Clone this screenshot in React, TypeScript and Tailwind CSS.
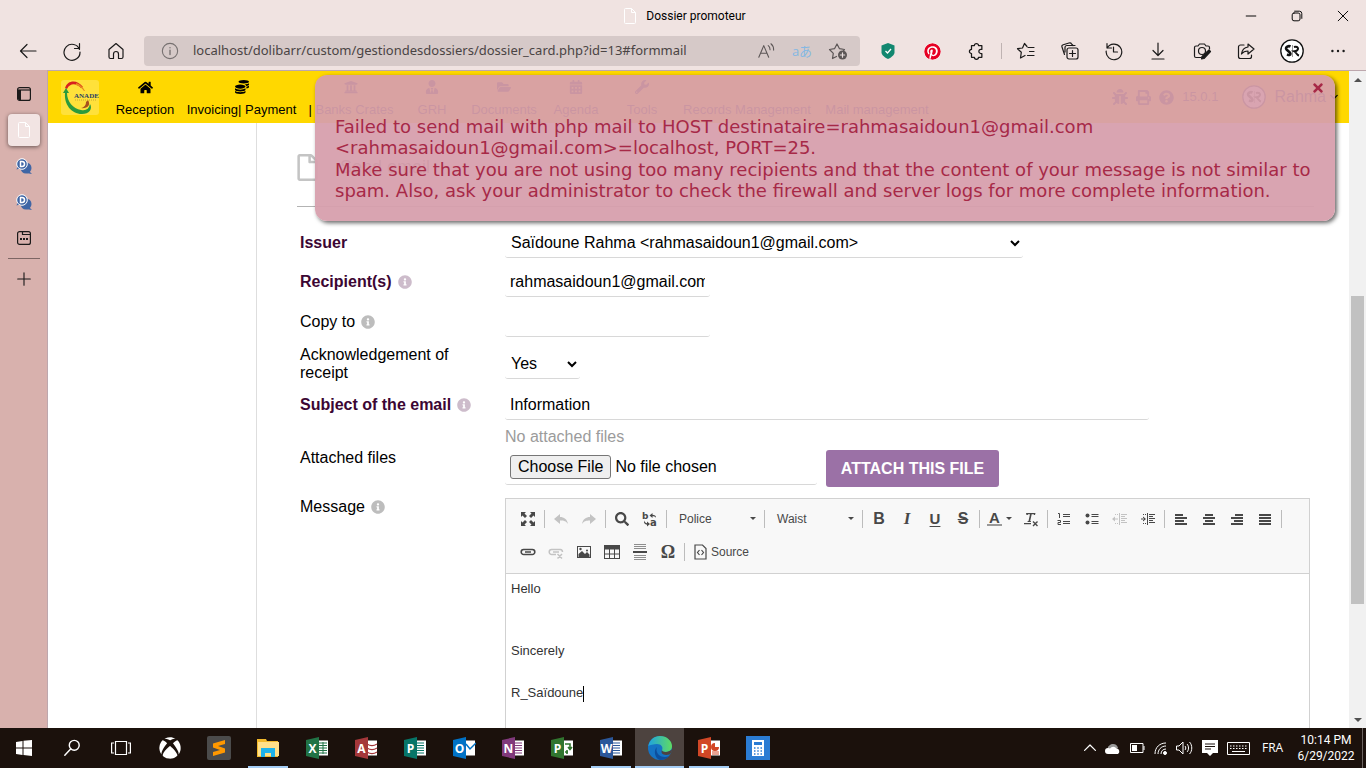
import React from 'react';
import {
  FaHome,
  FaCoins,
  FaUniversity,
  FaUserTie,
  FaFolderOpen,
  FaCalendarAlt,
  FaWrench,
  FaBug,
  FaPrint,
  FaQuestionCircle,
  FaInfoCircle,
  FaPinterest,
  FaXbox,
  FaTimes,
  FaRegFile,
  FaSearch,
} from 'react-icons/fa';

interface SvgProps {
  size?: number;
  className?: string;
  stroke?: number;
  children: React.ReactNode;
}

// Thin line icon on a 20x20 grid, used by the browser chrome
const Line: React.FC<SvgProps> = ({ size = 20, className, stroke = 1.2, children }) => (
  <svg
    width={size}
    height={size}
    viewBox="0 0 20 20"
    fill="none"
    stroke="currentColor"
    strokeWidth={stroke}
    strokeLinecap="round"
    strokeLinejoin="round"
    className={className}
    aria-hidden="true"
  >
    {children}
  </svg>
);

// Solid icon on a 16x16 grid, used by the editor toolbar
const Glyph: React.FC<{ children: React.ReactNode }> = ({ children }) => (
  <svg width="16" height="16" viewBox="0 0 16 16" fill="currentColor" aria-hidden="true">
    {children}
  </svg>
);

const PageIcon = ({ className }: { className?: string }) => (
  <svg width="12" height="16" viewBox="0 0 12 16" fill="none" stroke="currentColor" className={className} aria-hidden="true">
    <path d="M1.5.5h6l4 4v10a1 1 0 0 1-1 1h-9a1 1 0 0 1-1-1v-13a1 1 0 0 1 1-1zM7.5.5v4h4" />
  </svg>
);

const SrAvatar = ({ size }: { size: number }) => (
  <svg width={size} height={size} viewBox="0 0 24 24" aria-hidden="true">
    <circle cx="12" cy="12" r="11.2" fill="#fff" stroke="#111" strokeWidth="1.3" />
    <path d="M10.500 7.500C8.500 6.500 5.500 8 6.200 10c.8 2 4.300 2.500 4.300 4.800 0 1.500-1.500 1.500-3.500.5" fill="none" stroke="#111" strokeWidth="2.600" />
    <path d="M12.500 6v12" stroke="#999" strokeWidth="1" />
    <path d="M14 8c5-1.500 5.500 3.800.5 4.300 1.500.7 2 3.700 4.500 4.200" fill="none" stroke="#111" strokeWidth="2" />
  </svg>
);

const ChromeButton: React.FC<{ label: string; className?: string; children: React.ReactNode }> = ({
  label,
  className = 'w-11',
  children,
}) => (
  <button aria-label={label} className={`${className} h-full flex items-center justify-center shrink-0`}>
    {children}
  </button>
);

const TitleBar = () => (
  <div className="grid grid-cols-[1fr_auto_1fr] h-8 items-center">
    <span />
    <div className="flex items-center gap-2.5 pl-1 text-[12px] font-[Roboto,sans-serif]">
      <PageIcon className="text-white" />
      <span>Dossier promoteur</span>
    </div>
    <div className="flex justify-end h-full">
      <ChromeButton label="Minimize" className="w-[46px]">
        <Line size={12} stroke={1.6}><path d="M2 10h16" /></Line>
      </ChromeButton>
      <ChromeButton label="Restore" className="w-[46px]">
        <Line size={12} stroke={1.6}>
          <rect x="2" y="5" width="13" height="13" rx="3" />
          <path d="M6 2h8a4 4 0 0 1 4 4v8" />
        </Line>
      </ChromeButton>
      <ChromeButton label="Close" className="w-[46px]">
        <Line size={12} stroke={1.6}><path d="M2 2l16 16M18 2L2 18" /></Line>
      </ChromeButton>
    </div>
  </div>
);

const AddressBar = () => (
  <div className="flex flex-1 items-center h-[30px] mx-1.5 rounded bg-[#d6c9c8] min-w-0">
    <Line size={18} className="ml-[17px] text-[#767070]">
      <circle cx="10" cy="10" r="8.500" />
      <path d="M10 9v5M10 6.200v.3" strokeWidth="1.500" />
    </Line>
    <input
      aria-label="Address"
      readOnly
      value="localhost/dolibarr/custom/gestiondesdossiers/dossier_card.php?id=13#formmail"
      className="flex-1 min-w-0 ml-3.5 bg-transparent text-[13px] text-[#4a4444] outline-none font-['Noto_Sans',sans-serif]"
    />
    <button aria-label="Read aloud" className="w-9 flex justify-center text-[#5c5656]">
      <Line size={18}>
        <path d="M2 17L7.500 4 13 17M4 12.500h7M12.500 4c1.500 1 2 2.500 2 4.500M15.500 2c2 1.500 3 4 3 7" />
      </Line>
    </button>
    <button aria-label="Translate" className="w-9 text-[13px] leading-4 text-[#84b8e3] font-['Open_Sans','Noto_Sans_CJK_JP',sans-serif]">
      aあ
    </button>
    <button aria-label="Add to favorites" className="w-9 mr-1 flex justify-center text-[#5c5656]">
      <Line size={20}>
        <path d="M8.500 15.500L4.500 17.500l.8-5.200L1.500 8.500l5-.8L9 3l2.500 4.700 5 .8-1 1.200" />
        <circle cx="14.500" cy="14" r="4.500" fill="currentColor" stroke="none" />
        <path d="M14.500 11.800v4.400M12.300 14h4.400" stroke="#e8dddc" />
      </Line>
    </button>
  </div>
);

const BrowserToolbar = () => (
  <div className="flex items-center h-[38px] pl-1.5 pr-1.5 text-[#1b1a1a]">
    <ChromeButton label="Back"><Line><path d="M18 10H2.500M9 3.500L2.500 10 9 16.500" /></Line></ChromeButton>
    <ChromeButton label="Refresh">
      <Line><path d="M17.500 8.500A8 8 0 1 0 18 11M17.500 2.500v5h-5" /></Line>
    </ChromeButton>
    <ChromeButton label="Home">
      <Line><path d="M3 8.500L10 2.500l7 6V16a1.500 1.500 0 0 1-1.500 1.500h-3v-4.500a2.500 2.500 0 0 0-5 0v4.500h-3A1.500 1.500 0 0 1 3 16z" /></Line>
    </ChromeButton>
    <AddressBar />
    <ChromeButton label="Protection">
      <svg width="14" height="16" viewBox="0 0 14 16" aria-hidden="true">
        <path d="M7 0l6.500 2.500v7C13.500 12 9.500 15 7 16 4.500 15 .5 12 .5 9.500v-7z" fill="#12876f" />
        <path d="M4.500 8l2 2 3.500-4" fill="none" stroke="#fff" strokeWidth="1.300" />
      </svg>
    </ChromeButton>
    <ChromeButton label="Pinterest"><FaPinterest size={17} className="text-[#e60023] bg-white rounded-full" /></ChromeButton>
    <ChromeButton label="Extensions">
      <Line size={18} stroke={1.4}>
        <path d="M5 4h3.200a2.300 2.300 0 1 1 4.600 0H16.500v4.200h-1a2.300 2.300 0 1 0 0 4.600h1V17h-3.700a2.300 2.300 0 0 1-4.600 0H5v-4.200a2.300 2.300 0 1 1 0-4.600z" />
      </Line>
    </ChromeButton>
    <div className="w-1.5 flex justify-center"><span className="w-px h-4 bg-[#bfb3b2]" /></div>
    <ChromeButton label="Favorites">
      <Line>
        <path d="M12 6.500h6M13.500 10.500h4.500M11.500 14.500H18M11 5.500L8.500 2.500l-2 4.500-5 .7 3.800 3.600L4.500 17l4.500-2.500" />
      </Line>
    </ChromeButton>
    <ChromeButton label="Collections">
      <Line>
        <rect x="7" y="7" width="11" height="11" rx="2" />
        <path d="M12.500 9.500v6M9.500 12.500h6M4.500 13.500L2 6c-.3-1 .2-2 1.200-2.300L9 2c1-.3 2-.1 2.500.8L13 4.500M5 11V6.500A2 2 0 0 1 7 4.500h8" />
      </Line>
    </ChromeButton>
    <ChromeButton label="History">
      <Line><path d="M3 2.500v4.500h4.500M3.200 7A7.800 7.800 0 1 1 2.200 10M9.500 6v5h4" /></Line>
    </ChromeButton>
    <ChromeButton label="Downloads"><Line><path d="M10 2v12M5 9.500l5 5 5-5M4 18h12" /></Line></ChromeButton>
    <ChromeButton label="Screenshot">
      <Line>
        <path d="M9 16.500H4A1.500 1.500 0 0 1 2.500 15V6.500A1.500 1.500 0 0 1 4 5h2l1.500-2h5L14 5h2a1.500 1.500 0 0 1 1.500 1.500V8" />
        <circle cx="10" cy="10" r="3.500" />
        <path d="M17 9l1.500 1.500-6.500 7-2.500.5.500-2.500z" fill="currentColor" />
      </Line>
    </ChromeButton>
    <ChromeButton label="Share">
      <Line>
        <path d="M8 4H4.500A2 2 0 0 0 2.500 6v9.500a2 2 0 0 0 2 2h9a2 2 0 0 0 2-2V14M12 3l6 5-6 5v-3c-3 0-5 1-6.500 3C6 9 8.500 6.500 12 6z" />
      </Line>
    </ChromeButton>
    <ChromeButton label="Profile" className="w-12"><SrAvatar size={24} /></ChromeButton>
    <ChromeButton label="Settings">
      <Line size={16}>
        <g fill="currentColor" stroke="none">
          <circle cx="3" cy="10" r="1.500" /><circle cx="10" cy="10" r="1.500" /><circle cx="17" cy="10" r="1.500" />
        </g>
      </Line>
    </ChromeButton>
  </div>
);

const DolibarrIcon = () => (
  <svg width="18" height="17" viewBox="0 0 18 17" aria-hidden="true">
    <circle cx="11" cy="10" r="5.500" fill="#3f66a5" />
    <path d="M13 12l4 4-6-1z" fill="#3f66a5" />
    <path d="M3 8l-1.500 3.500L6 10z" fill="#3f66a5" />
    <circle cx="7" cy="6" r="5.300" fill="#3f66a5" stroke="#fff" />
    <path d="M5.500 3.500v5H7a2.500 2.500 0 0 0 0-5z" fill="none" stroke="#fff" strokeWidth="1.500" />
  </svg>
);

const VerticalTabs = () => (
  <div className="w-12 shrink-0 bg-[#d8b1ad] border-r border-[#bda7ad] flex flex-col items-center pt-1.5 text-[#1b1a1a]">
    <button aria-label="Toggle tabs" className="h-9 flex items-center">
      <svg width="14" height="14" viewBox="0 0 14 14" fill="none" stroke="currentColor" strokeWidth="1.200" aria-hidden="true">
        <rect x=".6" y=".6" width="12.800" height="12.800" rx="2" />
        <path d="M1 3h12.500" />
        <path d="M1 3h3v10H2l-1-1z" fill="currentColor" stroke="none" />
      </svg>
    </button>
    <div className="h-9 flex items-center">
      <button aria-label="Dossier promoteur" className="w-8 h-8 rounded bg-[#f2e4e3] shadow-[0_1px_4px_#00000088] flex items-center justify-center">
        <PageIcon className="text-white" />
      </button>
    </div>
    <button aria-label="Dolibarr" className="h-9 flex items-center"><DolibarrIcon /></button>
    <button aria-label="Dolibarr" className="h-9 flex items-center"><DolibarrIcon /></button>
    <button aria-label="Tab" className="h-9 flex items-center">
      <svg width="14" height="14" viewBox="0 0 14 14" fill="none" stroke="currentColor" strokeWidth="1.200" aria-hidden="true">
        <rect x=".6" y=".6" width="12.800" height="12.800" rx="2" />
        <path d="M5.500 1v2.500h8" />
        <path d="M3 8h2M6 8h2M9 8h2" strokeWidth="2" />
      </svg>
    </button>
    <span className="mt-0.5 w-8 h-px bg-[#7d6664]" />
    <button aria-label="New tab" className="h-10 flex items-center">
      <Line size={14} stroke={1.6}><path d="M10 1v18M1 10h18" /></Line>
    </button>
  </div>
);

const AnadeLogo = () => (
  <svg width="38" height="35" viewBox="0 0 38 35" aria-hidden="true">
    <rect width="38" height="35" rx="3" fill="#ffe13a" />
    <path d="M4 8C7-1 17 0 22 7l-2 1C15 3 9 3 6 9z" fill="#d8201f" />
    <path d="M15 3c4 1 7 4 9 8l-1 0c-2-3-5-5-8-6z" fill="#e88b1e" />
    <path d="M2 13l3-5 3 5-2 0c0 8 6 16 14 17 5 1 8-1 9-6 3 5-1 10-8 10C10 34 3 24 4 13z" fill="#2c9a3d" />
    <path d="M27 20c3 5 0 9-8 8 3 0 6-2 6-6z" fill="#a8511e" />
    <text x="13" y="18" fontSize="7" fontWeight="bold" fontFamily="Liberation Serif, serif" fill="#2b3f63">ANADE</text>
    <path d="M14 20h22" stroke="#c9a832" strokeDasharray="1 1" />
  </svg>
);

interface NavItem {
  label: string;
  width: string;
  icon?: React.ReactNode;
}

const navItems: NavItem[] = [
  { label: 'Reception', width: 'w-[72px]', icon: <FaHome size={15} /> },
  { label: 'Invoicing| Payment', width: 'w-[121px]', icon: <FaCoins size={14} /> },
  { label: '| Banks Crates', width: 'w-[98px]', icon: <FaUniversity size={14} /> },
  { label: 'GRH', width: 'w-[64px]', icon: <FaUserTie size={14} /> },
  { label: 'Documents', width: 'w-[80px]', icon: <FaFolderOpen size={14} /> },
  { label: 'Agenda', width: 'w-[64px]', icon: <FaCalendarAlt size={14} /> },
  { label: 'Tools', width: 'w-[68px]', icon: <FaWrench size={14} /> },
  { label: 'Records Management', width: 'w-[142px]' },
  { label: 'Mail management', width: 'w-[118px]' },
];

const TopMenu = () => (
  <nav className="flex h-[52px] shrink-0 bg-[#ffd800] text-black">
    <a href="#home" aria-label="Anade" className="w-[61px] pl-[13px] flex items-center shrink-0"><AnadeLogo /></a>
    {navItems.map((item) => (
      <a key={item.label} href="#menu" className={`${item.width} shrink-0 flex flex-col items-center pt-[9px] text-[13px] leading-[18px] whitespace-nowrap`}>
        <span className="h-[21px]">{item.icon}</span>
        {item.label}
      </a>
    ))}
    <div className="ml-auto flex items-center pr-[11px] text-[13px]">
      <FaBug size={16} className="mr-2" />
      <FaPrint size={15} className="mr-2" />
      <FaQuestionCircle size={15} className="mr-2" />
      <span className="mr-6">15.0.1</span>
      <SrAvatar size={24} />
      <span className="ml-2 mr-1 text-[16px]">Rahma</span>
      <Line size={8} stroke={3}><path d="M2 6l8 8 8-8" /></Line>
    </div>
  </nav>
);

const ErrorNotice = () => (
  <div
    role="alert"
    className="absolute left-[267px] right-3.5 top-1 rounded-xl bg-[#d79eac]/94 shadow-[2px_2px_4px_#00000099] px-5 pt-[41px] pb-5 flex flex-col gap-px text-[18px] leading-[21px] text-[#a72947] font-[Verdana,'DejaVu_Sans',sans-serif]"
  >
    <button aria-label="Close message" className="absolute top-1.5 right-2.5">
      <FaTimes size={14} />
    </button>
    <p>
      Failed to send mail with php mail to HOST destinataire=rahmasaidoun1@gmail.com
      <br />
      &lt;rahmasaidoun1@gmail.com&gt;=localhost, PORT=25.
    </p>
    <p>
      Make sure that you are not using too many recipients and that the content of your message is not similar to spam. Also,
      ask your administrator to check the firewall and server logs for more complete information.
    </p>
  </div>
);

interface RowProps {
  label: string;
  htmlFor: string;
  bold?: boolean;
  info?: boolean;
  className?: string;
  children: React.ReactNode;
}

const Row: React.FC<RowProps> = ({ label, htmlFor, bold, info, className = 'h-10 items-center', children }) => (
  <div className={`grid grid-cols-[205px_1fr] ${className}`}>
    <label htmlFor={htmlFor} className={`flex items-center gap-1.5 ${bold ? 'font-bold text-[#3c0633]' : 'pr-10'}`}>
      {label}
      {info && <FaInfoCircle size={14} className={bold ? 'text-[#cdbccb]' : 'text-[#bdbdbd]'} />}
    </label>
    {children}
  </div>
);

const fieldClass = 'h-[30px] rounded-[3px] border-b border-[#d8d8d8] bg-white outline-none';

const Tool: React.FC<{ label: string; off?: boolean; children: React.ReactNode }> = ({ label, off, children }) => (
  <button type="button" aria-label={label} disabled={off} className={`w-7 h-7 flex items-center justify-center ${off ? 'text-[#c3c3c3]' : 'text-[#484848]'}`}>
    {children}
  </button>
);

const Sep = () => (
  <span className="w-[5px] flex justify-center"><span className="w-px h-[18px] bg-[#bcbcbc]" /></span>
);

const Arrow = () => (
  <svg width="6" height="3" viewBox="0 0 6 3" aria-hidden="true"><path d="M0 0h6L3 3z" fill="#484848" /></svg>
);

const Combo = ({ label }: { label: string }) => (
  <button type="button" className="w-[93px] h-7 pl-2.5 pr-1.5 flex items-center justify-between">
    {label}
    <Arrow />
  </button>
);

const Editor = () => (
  <div className="border border-[#d1d1d1] grow flex flex-col min-h-[240px]">
    <div className="bg-[#f8f8f8] border-b border-[#d1d1d1] pl-2 pt-[3px] pb-[5px] text-[12px] text-[#484848]">
      <div className="flex items-center h-[33px]">
        <Tool label="Maximize">
          <Glyph>
            <path d="M1 1h5L4.500 2.500 7 5 5 7 2.500 4.500 1 6zM15 1v5l-1.500-1.500L11 7 9 5l2.500-2.500L10 1zM1 15v-5l1.500 1.500L5 9l2 2-2.500 2.500L6 15zM15 15h-5l1.500-1.500L9 11l2-2 2.500 2.500L15 10z" />
          </Glyph>
        </Tool>
        <Sep />
        <Tool label="Undo" off><Glyph><path d="M1 8l6-5v3c4 0 7 2 8 7-2-3-4-3.500-8-3.500V13z" /></Glyph></Tool>
        <Tool label="Redo" off><Glyph><path d="M15 8L9 3v3c-4 0-7 2-8 7 2-3 4-3.500 8-3.500V13z" /></Glyph></Tool>
        <Sep />
        <Tool label="Find"><FaSearch size={14} /></Tool>
        <Tool label="Replace">
          <svg width="16" height="16" viewBox="0 0 16 16" fill="currentColor" overflow="visible" aria-hidden="true">
            <text x="0" y="8" fontSize="9" fontWeight="bold" fontFamily="DejaVu Sans, sans-serif">b</text>
            <text x="8" y="15" fontSize="10" fontWeight="bold" fontFamily="DejaVu Sans, sans-serif">a</text>
            <path d="M7.500 4.500L10.500 2v1.700c2 0 3.500.8 3.500 3-1-1.200-2-1.500-3.500-1.500v1.700zM8 13l-3-2.500v1.700C3.500 12 2.500 11 2 9.500c-.5 2.500 1 4 3 4.200v1.700z" />
          </svg>
        </Tool>
        <Sep />
        <Combo label="Police" />
        <Sep />
        <Combo label="Waist" />
        <Sep />
        <Tool label="Bold"><span className="text-[16px] leading-4 font-bold">B</span></Tool>
        <Tool label="Italic"><span className="text-[17px] leading-4 font-bold italic font-['Liberation_Serif',serif]">I</span></Tool>
        <Tool label="Underline"><span className="text-[15px] leading-4 font-bold underline underline-offset-2">U</span></Tool>
        <Tool label="Strike"><span className="text-[16px] leading-4 font-bold line-through">S</span></Tool>
        <Sep />
        <button type="button" aria-label="Text color" className="w-[35px] h-7 flex items-center justify-center gap-1">
          <span className="text-[15px] leading-[13px] font-bold border-b-2 border-[#999] px-0.5">A</span>
          <Arrow />
        </button>
        <Tool label="Remove format">
          <Glyph>
            <path d="M3 2h9.500l-.5 2h-1l-.3-.7H8.700L7.200 10H8l-.2 1H4.500l.2-1h.8L7 3.300H5.200l-.7.7h-1zM1 12h7v1.200H1z" />
            <path d="M10 10.500l4.500 4.500M14.500 10.500L10 15" stroke="currentColor" strokeWidth="1.400" />
          </Glyph>
        </Tool>
        <Sep />
        <Tool label="Numbered list">
          <Glyph>
            <path d="M7 3h7v1H7zM7 5h7v1H7zM7 10h7v1H7zM7 12h7v1H7z" />
            <path d="M2 2.500h1.500V7M1.500 9.500h3v2h-2.500v2h3" fill="none" stroke="currentColor" />
          </Glyph>
        </Tool>
        <Tool label="Bulleted list">
          <Glyph>
            <circle cx="3.500" cy="4.500" r="2" /><circle cx="3.500" cy="11.500" r="2" />
            <path d="M7.500 3h7v1h-7zM7.500 5h7v1h-7zM7.500 10h7v1h-7zM7.500 12h7v1h-7z" />
          </Glyph>
        </Tool>
        <Tool label="Decrease indent" off>
          <Glyph><path d="M7 2h1v12H7zM9 3h6v1H9zM9 5h4v1H9zM9 7h6v1H9zM9 9h4v1H9zM9 11h6v1H9zM2 7.500h4v1H2zM0 8l3-2.500v5zM3 3h1v1H3zM5 3h1v1H5zM3 12h1v1H3zM5 12h1v1H5z" /></Glyph>
        </Tool>
        <Tool label="Increase indent">
          <Glyph><path d="M7 2h1v12H7zM9 3h6v1H9zM9 5h4v1H9zM9 7h6v1H9zM9 9h4v1H9zM9 11h6v1H9zM1 7.500h3v1H1zM6 8L3 5.500v5zM3 3h1v1H3zM5 3h1v1H5zM3 12h1v1H3zM5 12h1v1H5z" /></Glyph>
        </Tool>
        <Sep />
        <Tool label="Align left"><Glyph><path d="M2 3h8v2H2zM2 6h12v2H2zM2 9h9v2H2zM2 12h12v2H2z" /></Glyph></Tool>
        <Tool label="Center"><Glyph><path d="M4 3h8v2H4zM2 6h12v2H2zM4 9h8v2H4zM2 12h12v2H2z" /></Glyph></Tool>
        <Tool label="Align right"><Glyph><path d="M6 3h8v2H6zM2 6h12v2H2zM5 9h9v2H5zM2 12h12v2H2z" /></Glyph></Tool>
        <Tool label="Justify"><Glyph><path d="M2 3h12v2H2zM2 6h12v2H2zM2 9h12v2H2zM2 12h12v2H2z" /></Glyph></Tool>
        <Sep />
      </div>
      <div className="flex items-center h-[33px]">
        <Tool label="Link">
          <Glyph>
            <path d="M8.500 5.500H3.700a2.500 2.500 0 0 0 0 5h4.800M7.500 5.500h4.800a2.500 2.500 0 0 1 0 5H7.500M5 8h6" fill="none" stroke="currentColor" strokeWidth="1.600" />
          </Glyph>
        </Tool>
        <Tool label="Unlink" off>
          <Glyph>
            <path d="M8 5.500H3.700a2.500 2.500 0 0 0 0 5H8M8 5.500h4.300a2.500 2.500 0 0 1 2.200 2.500M5 8h6M9.500 10l4.500 4.500M14 10l-4.500 4.500" fill="none" stroke="currentColor" strokeWidth="1.500" />
          </Glyph>
        </Tool>
        <Tool label="Image">
          <Glyph>
            <path fillRule="evenodd" d="M1 2h14v12H1zM2 3v10h12V3z" />
            <path d="M2.500 13v-3L6 7l3 3 2-2 2.500 2.500V13z" /><circle cx="4.500" cy="5" r="1.200" /><circle cx="11" cy="6.500" r="1" />
          </Glyph>
        </Tool>
        <Tool label="Table">
          <Glyph><path fillRule="evenodd" d="M0 1h16v14H0zM1 5.500v4h4v-4zM6 5.500v4h4v-4zM11 5.500v4h4v-4zM1 10.500V14h4v-3.500zM6 10.500V14h4v-3.500zM11 10.500V14h4v-3.500z" /></Glyph>
        </Tool>
        <Tool label="Horizontal line">
          <Glyph>
            <path d="M2 0h12v1H2zM2 2h12v1H2zM2 4h12v1H2zM2 11h12v1H2zM2 13h12v1H2zM2 15h12v1H2z" opacity=".6" />
            <path d="M1 7h14v2H1z" />
          </Glyph>
        </Tool>
        <Tool label="Special character"><span className="text-[18px] leading-4 font-bold font-['Liberation_Serif',serif]">Ω</span></Tool>
        <Sep />
        <button type="button" className="h-7 flex items-center gap-1 pl-[7px] pr-2">
          <svg width="13" height="16" viewBox="0 0 13 16" fill="none" stroke="currentColor" strokeWidth="1.200" aria-hidden="true">
            <path d="M1 1h7.500L12 4.500V15H1zM5.500 6L3.500 8.500l2 2.500M7.500 6l2 2.500-2 2.500" />
          </svg>
          Source
        </button>
      </div>
    </div>
    <div id="message" role="textbox" aria-multiline="true" aria-label="Message" className="pl-[5px] pt-1 text-[13px] leading-[21px] text-[#333]">
      <p>Hello</p>
      <p className="pt-[41px]">Sincerely</p>
      <p className="pt-[21px]">R_Saïdoune<span className="inline-block w-px h-4 bg-black align-middle" /></p>
    </div>
  </div>
);

const MailForm = () => (
  <main className="flex-1 min-w-0 pl-10 pr-[35px] text-[16px] leading-[18px] text-black flex flex-col">
    <div className="h-[84px] shrink-0 border-b border-[#b3b3b3] pt-[31px] flex items-start gap-[22px]">
      <FaRegFile className="w-[21px] h-[27px] text-[#c4c4c4]" />
      <h1 className="text-[18px] leading-[27px] text-[#666]">Send email</h1>
    </div>
    <form className="pl-[3px] pr-1 pt-4 grow flex flex-col">
      <Row label="Issuer" htmlFor="issuer" bold className="h-[39px] items-center">
        <select id="issuer" className={`${fieldClass} w-[518px] pl-0.5`}>
          <option>Saïdoune Rahma &lt;rahmasaidoun1@gmail.com&gt;</option>
        </select>
      </Row>
      <Row label="Recipient(s)" htmlFor="recipient" bold info>
        <input id="recipient" defaultValue="rahmasaidoun1@gmail.com" className={`${fieldClass} w-[205px] px-[5px]`} />
      </Row>
      <Row label="Copy to" htmlFor="copy" info>
        <input id="copy" className={`${fieldClass} w-[205px] px-[5px]`} />
      </Row>
      <Row label="Acknowledgement of receipt" htmlFor="receipt" className="h-11 items-center">
        <select id="receipt" className={`${fieldClass} w-[75px] pl-0.5`}>
          <option>Yes</option>
          <option>No</option>
        </select>
      </Row>
      <Row label="Subject of the email" htmlFor="subject" bold info className="h-[38px] items-center">
        <input id="subject" defaultValue="Information" className={`${fieldClass} w-[644px] px-[5px]`} />
      </Row>
      <Row label="Attached files" htmlFor="files" className="h-[67px] mb-[7px] items-center">
        <div>
          <p className="text-[#9b9b9b] pb-1">No attached files</p>
          <div className="flex items-start">
            <input
              id="files"
              type="file"
              className="w-[312px] h-[35px] p-[5px] rounded-[3px] border-b border-[#d8d8d8] file:h-[24px] file:px-[7px] file:mr-1 file:bg-[#efefef] file:border file:border-solid file:border-[#767676] file:rounded-[3px]"
            />
            <button type="button" className="ml-[9px] w-[173px] h-[37px] rounded-[3px] bg-[#9b71a6] text-white font-bold uppercase">
              Attach this file
            </button>
          </div>
        </div>
      </Row>
      <Row label="Message" htmlFor="message" info className="grow items-stretch [&>label]:self-start">
        <Editor />
      </Row>
    </form>
  </main>
);

const Scrollbar = () => (
  <div className="w-[17px] shrink-0 bg-[#f1f1f1] flex flex-col items-center" aria-hidden="true">
    <span className="h-[17px] flex items-center">
      <svg width="8" height="4" viewBox="0 0 8 4"><path d="M0 4h8L4 0z" fill="#505050" /></svg>
    </span>
    <span className="flex-[208]" />
    <span className="flex-[308] w-[13px] bg-[#c1c1c1]" />
    <span className="flex-[107]" />
    <span className="h-[17px] flex items-center">
      <svg width="8" height="4" viewBox="0 0 8 4"><path d="M0 0h8L4 4z" fill="#505050" /></svg>
    </span>
  </div>
);

// Office app: coloured door with its letter, white sheet behind
const OfficeIcon = ({ letter, color, children }: { letter: string; color: string; children?: React.ReactNode }) => (
  <svg width="24" height="22" viewBox="0 0 24 22" aria-hidden="true">
    <path d="M12 3.500h11v15H12z" fill="#fff" />
    {children ?? <path d="M14 6h7M14 8.500h7M14 11h7M14 13.500h7M14 16h7" stroke={color} strokeWidth="1.200" />}
    <path d="M1 3L14 0v22L1 19z" fill={color} />
    <text x="7.500" y="15.500" textAnchor="middle" fontSize="12" fontWeight="bold" fontFamily="Open Sans, sans-serif" fill="#fff">{letter}</text>
  </svg>
);

interface TaskApp {
  name: string;
  open?: boolean;
  active?: boolean;
  icon: React.ReactNode;
}

const apps: TaskApp[] = [
  { name: 'Xbox', icon: <FaXbox size={22} /> },
  {
    name: 'Sublime Text',
    icon: (
      <svg width="24" height="24" viewBox="0 0 24 24" aria-hidden="true">
        <rect width="24" height="24" rx="2" fill="#4b4b4b" />
        <path d="M6 7.500L18 4v4l-7 2 7 2.500v4L6 20v-4l7-2-7-2.500z" fill="#ff9800" />
      </svg>
    ),
  },
  {
    name: 'File Explorer',
    open: true,
    icon: (
      <svg width="22" height="20" viewBox="0 0 22 20" aria-hidden="true">
        <path d="M0 1h9l1 2h11v16H0z" fill="#f2b92c" />
        <path d="M1 4h21v14H1z" fill="#ffe08a" />
        <path d="M4 10h14v9h-4v-4H8v4H4z" fill="#1fb3ea" />
      </svg>
    ),
  },
  {
    name: 'Excel',
    icon: (
      <OfficeIcon letter="X" color="#217346">
        <path d="M14 6h8M14 8.500h8M14 11h8M14 13.500h8M14 16h8M18 5v12" stroke="#217346" />
      </OfficeIcon>
    ),
  },
  {
    name: 'Access',
    icon: (
      <OfficeIcon letter="A" color="#a4373a">
        <path d="M13 7c3 2 7 2 10 0M13 11c3 2 7 2 10 0M13 15c3 2 7 2 10 0" fill="none" stroke="#a4373a" strokeWidth="1.200" />
      </OfficeIcon>
    ),
  },
  { name: 'Publisher', icon: <OfficeIcon letter="P" color="#077568" /> },
  {
    name: 'Outlook',
    icon: (
      <OfficeIcon letter="O" color="#0072c6">
        <path d="M14 7l4 5 6-6" fill="none" stroke="#0072c6" strokeWidth="1.500" />
      </OfficeIcon>
    ),
  },
  { name: 'OneNote', icon: <OfficeIcon letter="N" color="#80397b" /> },
  {
    name: 'Project',
    icon: (
      <OfficeIcon letter="P" color="#31752f">
        <path d="M15 7h5v5M15 15h3M18 10l2 2.500 2-2.500M17 13v4" fill="none" stroke="#31752f" strokeWidth="1.600" />
      </OfficeIcon>
    ),
  },
  { name: 'Word', open: true, icon: <OfficeIcon letter="W" color="#2b579a" /> },
  {
    name: 'Edge',
    open: true,
    active: true,
    icon: (
      <svg width="24" height="24" viewBox="0 0 24 24" aria-hidden="true">
        <defs>
          <linearGradient id="edgeTop" x1="0" x2="1">
            <stop offset="0" stopColor="#1fa2e0" />
            <stop offset="1" stopColor="#5fdc62" />
          </linearGradient>
        </defs>
        <circle cx="12" cy="12" r="12" fill="#1573c4" />
        <path d="M.3 10C1.500 4 6 0 12 0c7 0 12 5 12 10 0 4-3 6-6.500 6-2.500 0-4-.8-3.500-2 1.500-3-1-6-5-6-3.500 0-7 1-8.700 2z" fill="url(#edgeTop)" />
        <path d="M9 11c-2 5 2 10 8 10 2 0 4-.8 5-2-2 3-6 5-10 5C7 23 5 14 9 11z" fill="#0d4f9e" />
        <path d="M14.200 13.500c-.7 1.500.8 2.500 3.300 2.500 2.500 0 4.500-1 6.500-2.500 0 2-1 4-2.500 5-6 1.500-9.500-1-7.300-5z" fill="#4d433f" />
      </svg>
    ),
  },
  {
    name: 'PowerPoint',
    open: true,
    icon: (
      <OfficeIcon letter="P" color="#d24726">
        <path d="M18 6v4h4a4 4 0 1 1-4-4z" fill="#d24726" />
        <path d="M15 15h7M15 17h7" stroke="#d24726" />
      </OfficeIcon>
    ),
  },
  {
    name: 'Calculator',
    icon: (
      <svg width="24" height="24" viewBox="0 0 24 24" aria-hidden="true">
        <rect width="24" height="24" fill="#2b7cd3" />
        <path d="M6 4h12v16H6z" fill="#fff" />
        <path d="M8 6h8v3H8z" fill="#2b7cd3" />
        <path d="M8 12h8M8 15h8M8 18h8" stroke="#2b7cd3" strokeWidth="1.500" strokeDasharray="1.500 1.750" />
      </svg>
    ),
  },
];

const Taskbar = () => (
  <footer className="h-10 shrink-0 bg-[#1b110c] text-white flex items-stretch font-['Open_Sans',sans-serif] text-[12px]">
    <button aria-label="Start" className="w-12 flex items-center justify-center">
      <svg width="16" height="16" viewBox="0 0 16 16" fill="currentColor" aria-hidden="true">
        <path d="M0 2l6.500-1v6.500H0zM7.500.8L16 0v7.500H7.500zM0 8.500h6.500V15L0 14zM7.500 8.500H16V16l-8.500-1z" />
      </svg>
    </button>
    <button aria-label="Search" className="w-12 flex items-center justify-center">
      <Line size={18} stroke={1.6}><circle cx="12.500" cy="7" r="5.500" /><path d="M8.500 11L2 18" /></Line>
    </button>
    <button aria-label="Task view" className="w-[49px] flex items-center justify-center">
      <svg width="20" height="14" viewBox="0 0 20 14" fill="none" stroke="currentColor" strokeWidth="1.200" aria-hidden="true">
        <path d="M4.500.5h11v13h-11zM3 2H.6v10H3M17 2h2.400v10H17" />
      </svg>
    </button>
    {apps.map((app) => (
      <button
        key={app.name}
        aria-label={app.name}
        className={`w-[49px] flex flex-col items-center ${app.active ? 'bg-[#4d433f]' : ''}`}
      >
        <span className="grow flex items-center pt-0.5">{app.icon}</span>
        <span className={`h-0.5 ${app.active ? 'w-full' : 'w-10'} ${app.open ? 'bg-[#a5cdf5]' : ''}`} />
      </button>
    ))}
    <div className="ml-auto flex items-center">
      <div className="flex items-center gap-[9px] mr-3">
        <Line size={12} stroke={2}><path d="M1 14l9-9 9 9" /></Line>
        <svg width="16" height="11" viewBox="0 0 16 11" aria-hidden="true">
          <path d="M3 7a4 4 0 0 1 2-5 5 5 0 0 1 8 3L8 8z" fill="#999" />
          <path d="M3 11a3 3 0 0 1 0-6c1 0 1.500.2 2 .5a4 4 0 0 1 6.500 0 3 3 0 0 1 1.500 5.500z" fill="#fff" />
        </svg>
        <svg width="15" height="10" viewBox="0 0 15 10" aria-hidden="true">
          <path d="M.5.500h12.500v9H.5zM14 3v4" fill="none" stroke="#fff" /><path d="M2 2h5v6H2z" fill="#fff" />
        </svg>
        <svg width="13" height="13" viewBox="0 0 13 13" fill="none" stroke="#fff" aria-hidden="true">
          <path d="M1 12C1 5 6 1 12 1M4 12c0-4 3-8 8-8M7 12c0-3 2-5 5-5" /><circle cx="11" cy="11" r="1.500" fill="#fff" />
        </svg>
        <svg width="17" height="14" viewBox="0 0 17 14" fill="none" stroke="#fff" aria-hidden="true">
          <path d="M.5 5h2.500l4-4v12l-4-4H.500zM9 5c1 1 1 3 0 4M11 3c2 2 2 6 0 8M13.500 1c3 3 3 9 0 12" />
        </svg>
        <svg width="16" height="16" viewBox="0 0 16 16" aria-hidden="true">
          <path d="M0 0h16v13h-5l-3 3-3-3H0z" fill="#fff" /><path d="M3 4h10M3 6.500h10M3 9h6" stroke="#1b110c" />
        </svg>
        <svg width="23" height="13" viewBox="0 0 23 13" fill="none" stroke="#fff" aria-hidden="true">
          <path d="M.5.500h22v12H.5z" /><path d="M3 4h17M3 6.500h17" strokeDasharray="1.500 1.500" /><path d="M5 9.500h13" />
        </svg>
      </div>
      <span className="w-7">FRA</span>
      <div className="w-[72px] text-center leading-4 font-[Roboto,sans-serif]">
        10:14 PM
        <br />
        6/29/2022
      </div>
      <span className="w-1 h-full border-l border-[#6b6360]" />
    </div>
  </footer>
);

export default function App() {
  return (
    <div className="h-screen flex flex-col overflow-hidden bg-[#f0e3e1] text-black font-['Liberation_Sans',Arial,sans-serif]">
      <TitleBar />
      <BrowserToolbar />
      <div className="flex flex-1 min-h-0">
        <VerticalTabs />
        <div className="flex flex-1 min-w-0 border-t border-[#bda7ad] bg-white">
          <div className="relative flex flex-col flex-1 min-w-0 overflow-hidden">
            <TopMenu />
            <div className="flex flex-1 min-h-0">
              <aside className="w-[209px] shrink-0 border-r border-[#dedede]" />
              <MailForm />
            </div>
            <ErrorNotice />
          </div>
          <Scrollbar />
        </div>
      </div>
      <Taskbar />
    </div>
  );
}
